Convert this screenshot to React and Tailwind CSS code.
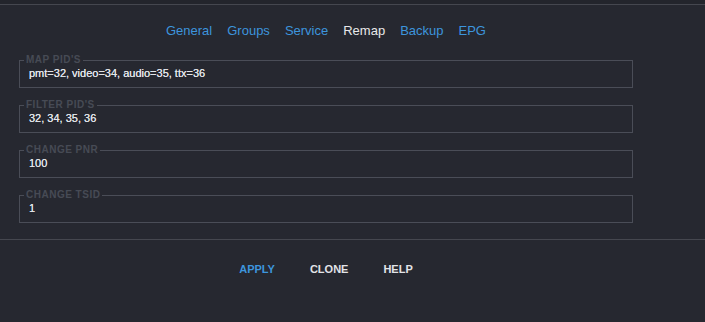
import React from 'react';

const tabs = ['General', 'Groups', 'Service', 'Remap', 'Backup', 'EPG'];

const fields = [
  { label: "MAP PID'S", value: 'pmt=32, video=34, audio=35, ttx=36' },
  { label: "FILTER PID'S", value: '32, 34, 35, 36' },
  { label: 'CHANGE PNR', value: '100' },
  { label: 'CHANGE TSID', value: '1' },
];

const Field = ({ label, value }) => (
  <fieldset className="border border-[#4a4d57] px-[9px] m-0">
    <legend className="ml-[-5px] px-[2px] text-[10px] leading-[10px] font-bold tracking-[0.5px] text-[#474b55]">
      {label}
    </legend>
    <div className="h-[22px] pt-[2px] text-[11px] leading-[13px] text-[#e2e5ea] [text-shadow:0_0_0.4px_#e2e5ea]">
      {value}
    </div>
  </fieldset>
);

export default function App() {
  return (
    <div className="w-[705px] h-[322px] bg-[#262830] font-['Liberation_Sans',Arial,sans-serif] overflow-hidden">
      <div className="h-[4px] bg-[#23252c]" />
      <div className="h-px bg-[#45474f]" />
      <div className="w-[652px]">
        <nav className="flex justify-center gap-[15px] pt-[18px] text-[13px] leading-[15px]">
          {tabs.map((t) => (
            <span key={t} className={t === 'Remap' ? 'text-[#e8e8ea]' : 'text-[#3d95dd]'}>
              {t}
            </span>
          ))}
        </nav>
        <div className="px-[19px] pt-[17px] flex flex-col gap-[12px]">
          {fields.map((f) => (
            <Field key={f.label} {...f} />
          ))}
        </div>
      </div>
      <div className="h-px bg-[#45474f] mt-[16px]" />
      <div className="w-[652px] flex justify-center gap-[35px] pt-[23px] text-[11px] leading-[13px] font-bold">
        <span className="text-[#3d95dd]">APPLY</span>
        <span className="text-[#e2e4e8]">CLONE</span>
        <span className="text-[#e2e4e8]">HELP</span>
      </div>
    </div>
  );
}
